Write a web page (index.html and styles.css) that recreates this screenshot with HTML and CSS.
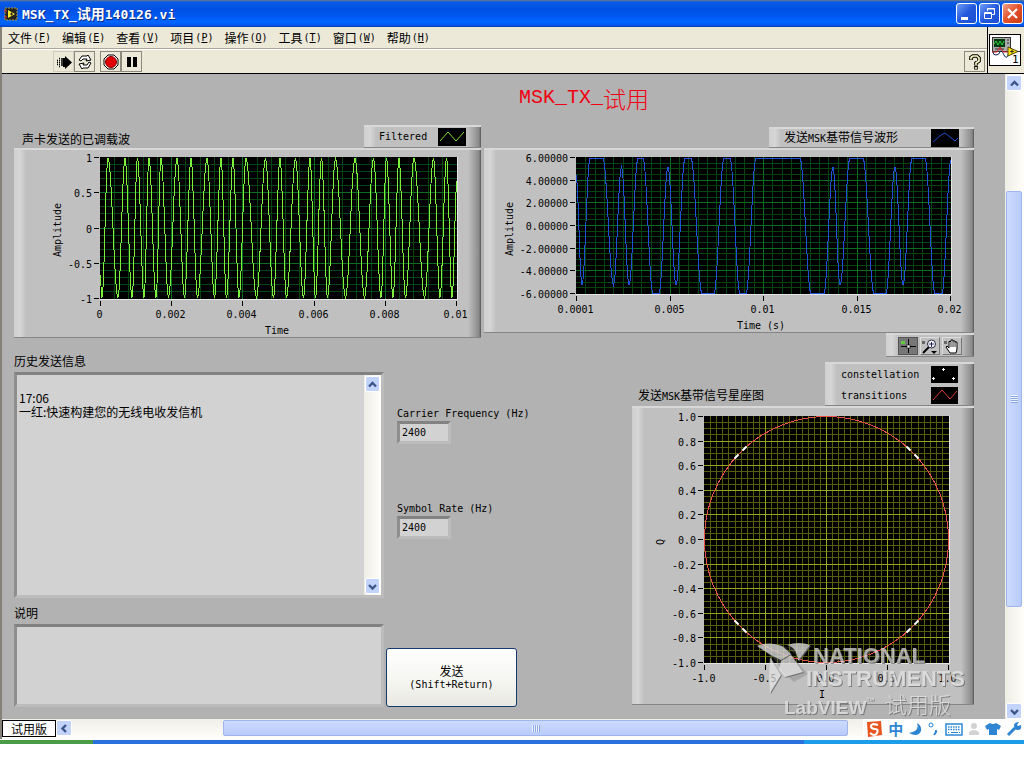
FILE: index.html
```html
<!DOCTYPE html>
<html lang="zh-CN">
<head>
<meta charset="utf-8">
<title>MSK_TX_试用140126.vi</title>
<link rel="stylesheet" href="styles.css">
</head>
<body>
<div class="window">
  <header class="titlebar">
    <svg class="app-icon" width="14" height="14" viewBox="0 0 14 14"><rect x="1" y="1" width="12" height="12" fill="#222" stroke="#b89b3a" stroke-dasharray="2 1"/><path d="M4 3v8l7-4z" fill="#ffe92e"/><path d="M6 7h3M7.500 5.500v3" stroke="#222"/><path d="M0 4h3M0 10h3" stroke="#e33"/></svg>
    <span class="window-title">MSK_TX_<span class="zh">试用</span>140126.vi</span>
    <div class="window-buttons">
      <button class="wbtn" aria-label="最小化"><svg width="19" height="19"><rect x="4" y="13" width="7" height="3" fill="#fff"/></svg></button>
      <button class="wbtn" aria-label="还原"><svg width="19" height="19" fill="none" stroke="#fff"><path d="M7.500 7V4.500h7v6H12M7 5h8M4.500 8.500h7v6h-7zM4 9.500h8" /></svg></button>
      <button class="wbtn close" aria-label="关闭"><svg width="19" height="19"><path d="M5 5l9 9M14 5l-9 9" stroke="#fff" stroke-width="2.200"/></svg></button>
    </div>
  </header>

  <div class="chrome">
    <div class="bars">
      <nav class="menubar">
        <button>文件<span class="key">(<u>F</u>)</span></button>
        <button>编辑<span class="key">(<u>E</u>)</span></button>
        <button>查看<span class="key">(<u>V</u>)</span></button>
        <button>项目<span class="key">(<u>P</u>)</span></button>
        <button>操作<span class="key">(<u>O</u>)</span></button>
        <button>工具<span class="key">(<u>T</u>)</span></button>
        <button>窗口<span class="key">(<u>W</u>)</span></button>
        <button>帮助<span class="key">(<u>H</u>)</span></button>
      </nav>
      <div class="toolbar">
        <button class="tool running" aria-label="运行"><svg width="18" height="18"><path d="M2 7.500h1M4 5.500h1M6 6h3M4 7.500h1M6 8h3M2 9.500h1M4 9.500h1M6 10h3M2 11.500h1M4 11.500h1M6 12h3M4 13.500h1" stroke="#000" stroke-width="1.500"/><path d="M8 5h2V3l7 6.500L10 16v-2H8z"/></svg></button>
        <button class="tool" aria-label="连续运行"><svg width="18" height="18" fill="#fff" stroke="#000"><path d="M3 7l3-4h5l1-1 3 5-5 1 1-2H7L5 8zM15 10l-3 5H7l-1 1-3-5 5-1-1 2h4l2-3z"/></svg></button>
        <button class="tool gap" aria-label="中止"><svg width="18" height="18"><path d="M6 2h6l4 4v6l-4 4H6l-4-4V6z" fill="#fff" stroke="#000"/><circle cx="9" cy="9" r="5.500" fill="#e00000" stroke="#800"/></svg></button>
        <button class="tool" aria-label="暂停"><svg width="18" height="18"><path d="M4 4h4v10H4zM10 4h4v10h-4z"/></svg></button>
        <button class="tool help" aria-label="帮助"><svg width="18" height="18" fill="none"><path d="M5 7V4.500L7 3h4l2 2v3l-3 2v2.500M10 13v3.500" stroke="#000" stroke-width="3.600"/><path d="M5 6.500V4.500L7 3h4l2 2v3l-3 2v2M10 14v2" stroke="#ffffc8" stroke-width="1.600"/></svg></button>
      </div>
    </div>
    <div class="connector">
      <svg width="32" height="32" viewBox="0 0 32 32"><rect x=".5" y=".5" width="31" height="31" fill="#fff" stroke="#000"/><rect x="3.500" y="3.500" width="18" height="14" fill="#aaa" stroke="#333"/><rect x="5" y="5" width="11" height="8" fill="#053b12"/><path d="M5 10l2-3 2 4 2-4 2 4 2-4" stroke="#30d040" fill="none"/><path d="M18 6h2M18 9h2M6 15h9" stroke="#333"/><path d="M3 18h5l3-5 3 5h5" stroke="#d22" fill="none"/><path d="M4 18q0 3 3 3t4-3 4 3 5-3" stroke="#125" fill="none"/><path d="M19 13v9l10-4.500z" fill="#ffe600" stroke="#554400"/><path d="M21 17.500h4M23 15.500v4M28 17.500h3" stroke="#333"/><text class="connector-num" x="23" y="29">1</text></svg>
    </div>
  </div>

  <div class="view">
    <main class="panel">
      <h1>MSK_TX_<span class="zh">试用</span></h1>

      <div class="row-waves">
        <figure class="graph">
          <div class="graph-head">
            <figcaption class="zh">声卡发送的已调载波</figcaption>
            <div class="tab tab-filtered"><span>Filtered</span><svg width="28" height="18"><rect width="28" height="18"/><path d="M2 13l8-9 8 9 8-9" fill="none" stroke="#7be03c"/></svg></div>
          </div>
          <div class="bezel"><svg id="carrier" viewBox="14 148 467 190"></svg></div>
        </figure>

        <figure class="graph">
          <div class="graph-head">
            <div class="tab tab-baseband"><span class="zh">发送<span class="latin">MSK</span>基带信号波形</span><svg width="28" height="18"><rect width="28" height="18"/><path d="M2 13l8-7 4-2 10 8 3-3" fill="none" stroke="#1c4fc8"/></svg></div>
          </div>
          <div class="bezel"><svg id="baseband" viewBox="484 148 490 185"></svg></div>
          <div class="palette">
            <button class="pal on" aria-label="光标"><svg width="20" height="16"><rect x="3" y="3" width="4" height="3" fill="#5ecb3c"/><path d="M3 8.500h15M10.500 1v14" stroke="#000"/><rect x="9" y="7" width="3" height="3" fill="#fff" stroke="#000" stroke-width=".6"/></svg></button>
            <button class="pal" aria-label="缩放"><svg width="20" height="16"><rect x="2" y="3" width="3" height="3" fill="#666"/><path d="M9 9l-6 6" stroke="#000" stroke-width="2"/><circle cx="11.500" cy="6" r="4" fill="#fff" stroke="#224"/><path d="M9 6h5M11.500 4v5" stroke="#226"/><path d="M11 13h6l-3 3z"/></svg></button>
            <button class="pal" aria-label="平移"><svg width="20" height="16"><rect x="2" y="3" width="3" height="3" fill="#666"/><path d="M8 15l-4-6 1-1 2 2V3.500h2V2h2v1h2v1h2v7l-1 4z" fill="#fff" stroke="#000"/><path d="M9 4v5M11 3v6M13 4v5" stroke="#000" stroke-width=".8"/></svg></button>
          </div>
        </figure>
      </div>

      <div class="row-controls">
        <section class="messages">
          <label class="zh" for="history">历史发送信息</label>
          <div class="sunken history">
            <textarea id="history" class="zh" readonly>

17:06
一红:快速构建您的无线电收发信机</textarea>
            <div class="vscroll slim">
              <button class="arrow" aria-label="向上"><svg width="15" height="15"><path d="M4 9.500l3.500-3.500L11 9.500" /></svg></button>
              <button class="arrow" aria-label="向下"><svg width="15" height="15"><path d="M4 6l3.500 3.500L11 6" /></svg></button>
            </div>
          </div>
          <label class="zh" for="note">说明</label>
          <div class="sunken note"><textarea id="note" class="zh"></textarea></div>
        </section>

        <section class="settings">
          <div class="field"><label for="carrier-hz">Carrier Frequency (Hz)</label><input id="carrier-hz" value="2400"></div>
          <div class="field"><label for="symbol-hz">Symbol Rate (Hz)</label><input id="symbol-hz" value="2400"></div>
          <button class="send"><span class="zh">发送</span><span>(Shift+Return)</span></button>
        </section>

        <figure class="graph constellation">
          <div class="graph-head">
            <figcaption class="zh">发送<span class="latin">MSK</span>基带信号星座图</figcaption>
            <div class="tab tab-stack">
              <div class="legend"><span>constellation</span><svg width="27" height="17"><rect width="27" height="17"/><path d="M11 3.500h3M12.500 2v3M1 12.500h3M2.500 11v3M21 12.500h3M22.500 11v3" stroke="#fff"/></svg></div>
              <div class="legend"><span>transitions</span><svg width="27" height="17"><rect width="27" height="17"/><path d="M2 13l9-10 8 9 7-8" fill="none" stroke="#d8413c"/></svg></div>
            </div>
          </div>
          <div class="bezel"><svg id="iq" viewBox="632 406 342 299"></svg></div>
        </figure>
      </div>

      <svg class="watermark" width="212" height="76" viewBox="0 0 212 76">
        <g class="wm-shade"><path d="M3 4q10-5 26 0l6 9 16 18-14 8-10-9-10-14zM30 4q12-3 23 0l-9 12z"/></g>
        <g class="wm-light">
          <path d="M0 3q13-5 25 0l9 8-10 6-10-5zM24 18l10-6 12 17-18 5-6-7zM30 2q12-4 23 0l-12 16q-1-14-11-16zM13 14l11 18-11 18-1-18z"/>
          <text x="56" y="20" class="wm-big">NATIONAL</text>
          <text x="49" y="43" class="wm-big">INSTRUMENTS</text>
          <text x="27" y="71" class="wm-mid">LabVIEW</text>
          <text x="128" y="70" class="wm-zh">试用版</text>
          <text x="109" y="60" class="wm-tm">™</text>
        </g>
      </svg>
    </main>
    <div class="vscroll">
      <button class="arrow" aria-label="向上滚动"><svg width="15" height="15"><path d="M4 9.500l3.500-3.500L11 9.500" /></svg></button>
      <div class="track"><div class="thumb"><i class="grip"></i></div></div>
      <button class="arrow" aria-label="向下滚动"><svg width="15" height="15"><path d="M4 6l3.500 3.500L11 6" /></svg></button>
    </div>
  </div>

  <div class="hbar">
    <span class="trial zh">试用版</span>
    <button class="arrow" aria-label="向左滚动"><svg width="15" height="15"><path d="M9 4L5.500 7.500 9 11" /></svg></button>
    <div class="htrack"><div class="hthumb"><i class="grip"></i></div></div>
    <div class="ime">
      <svg width="18" height="18" viewBox="0 0 18 18"><path d="M2 2l14-1 1 14-14 2z" fill="#e8531e"/><path d="M13 5q-7-2-7 1t4 3 2 4-7 0" fill="none" stroke="#fff" stroke-width="2.200"/></svg>
      <span class="ime-zh">中</span>
      <svg width="14" height="16" viewBox="0 0 14 16"><path d="M9 2q3 8-8 10 9 5 12-2 1-5-4-8z" fill="#2e86d3"/></svg>
      <svg width="12" height="16" viewBox="0 0 12 16"><circle cx="4" cy="4" r="2" fill="none" stroke="#2e86d3"/><path d="M9 9v2l-2 3" fill="none" stroke="#2e86d3" stroke-width="2"/></svg>
      <svg width="18" height="14" viewBox="0 0 18 14"><rect x="1" y="2" width="16" height="11" fill="#fff" stroke="#2e86d3" stroke-width="1.500"/><path d="M3 5h12M3 7.500h12" stroke="#2e86d3" stroke-width="1.500" stroke-dasharray="1.500 1"/><path d="M3 10.500h1M6 10.500h7M14 10.500h1" stroke="#2e86d3"/></svg>
      <svg width="12" height="16" viewBox="0 0 12 16"><circle cx="6" cy="5" r="3" fill="#d2d2d2"/><path d="M1 14V11q5-4 10 0v3z" fill="#d2d2d2"/></svg>
      <svg width="16" height="16" viewBox="0 0 16 16"><path d="M5 2q3 2 6 0l5 3-2 4-2-1v6H4V8L2 9 0 5z" fill="#2e86d3"/></svg>
      <svg width="16" height="16" viewBox="0 0 16 16"><path d="M2 14l7-7" stroke="#2e86d3" stroke-width="3"/><path d="M13 1q-5 0-5 4t4 4 3-5l-3 1-1-1z" fill="#2e86d3"/></svg>
    </div>
  </div>
  <div class="taskbar"></div>
</div>
<script src="charts.js"></script>
</body>
</html>
```
FILE: styles.css
```css
* { box-sizing: border-box; }
body { margin: 0; background: #fff; color: #000; font: 10px/14px "DejaVu Sans Mono", monospace; }
button, textarea, input { font: inherit; color: inherit; margin: 0; padding: 0; border: 0; background: none; }
svg { display: block; flex: none; }
figure, h1 { margin: 0; }
.zh { font-family: "Noto Sans CJK SC", sans-serif; font-size: 12px; line-height: 14px; }
.latin { font-family: "DejaVu Sans Mono", monospace; font-size: 10px; }
.window { display: flex; flex-direction: column; border-left: 2px solid #85827a; }

.titlebar { display: flex; align-items: center; height: 27px; margin-left: -2px; padding: 0 1px 0 4px; gap: 4px; background: linear-gradient(#6a7a86 0, #0b5ce8 2px, #0050e2 9px, #0058f0 16px, #0066ff 22px, #0058ee 25px, #003bb0 27px); color: #fff; }
.window-title { flex: 1; font-size: 13px; font-weight: bold; line-height: 20px; text-shadow: 1px 1px #0a2a80; }
.window-title .zh { font-size: 14px; line-height: 20px; }
.window-buttons { display: flex; gap: 2px; }
.wbtn { width: 21px; height: 21px; border: 1px solid #fff; border-radius: 3px; background: linear-gradient(135deg, #6f9cf4, #2459dd 50%, #1c4fd0); }
.close { background: linear-gradient(135deg, #f0a088, #e2502a 50%, #c83c14); }

.chrome { display: flex; height: 47px; background: #ece9d8; border-bottom: 1px solid #000; }
.bars { flex: 1; display: flex; flex-direction: column; }
.menubar { display: flex; gap: 11px; height: 22px; padding-left: 6px; border-bottom: 1px solid #aca899; }
.menubar button { display: flex; align-items: center; gap: 1px; height: 21px; font-family: "Noto Sans CJK SC", sans-serif; font-size: 12px; }
.key { font-family: "DejaVu Sans Mono", monospace; font-size: 10px; }
.toolbar { flex: 1; display: flex; align-items: center; padding: 0 2px 0 51px; border-top: 1px solid #fff; }
.tool { width: 21px; height: 21px; border: 1px solid; border-color: #fff #77746a #77746a #fff; outline: 1px solid #8d897c; outline-offset: -1px; padding: 1px; }
.running { border-color: #ccc; outline-color: #d0cdbf; }
.gap { margin-left: 5px; }
.help { margin-left: auto; }
.connector { width: 37px; padding: 7px 1px; border-left: 1px solid #000; }
.connector-num { font: 11px "DejaVu Sans Mono", monospace; }

.view { display: flex; }
.panel { position: relative; flex: 1; min-width: 0; padding: 12px 31px 12px 12px; background: #b2b2b2; }
h1 { display: flex; align-items: center; justify-content: center; height: 24px; margin-bottom: 15px; padding-left: 180px; color: #f00010; font: 20px/24px "Liberation Mono", monospace; }
h1 .zh { font-size: 23px; line-height: 24px; font-weight: 300; }

.row-waves { display: grid; grid-template-columns: minmax(0, 467fr) minmax(0, 490fr); gap: 3px; align-items: start; }
.row-controls { display: grid; grid-template-columns: minmax(0, 370fr) minmax(0, 248fr) minmax(0, 342fr); margin-top: -3px; }
.graph-head { display: flex; align-items: flex-end; justify-content: space-between; height: 23px; }
.graph-head figcaption { padding: 0 0 2px 8px; }
.bezel, .tab, .palette { background: linear-gradient(90deg, #cfcfcf 0, #d6d6d6 6px, #c0c0c0 12px, #c0c0c0 calc(100% - 13px), #8a8a8a calc(100% - 2px), #555 100%); border-top: 2px solid #d8d8d8; border-bottom: 1px solid #858585; }
.bezel svg { width: 100%; margin: -2px 0 -1px; }
.tab { display: flex; align-items: center; justify-content: space-between; margin-left: auto; padding: 0 15px; }
.tab-filtered { width: 117px; height: 23px; }
.tab-baseband { width: 205px; height: 21px; }
.palette { display: flex; gap: 2px; width: 88px; height: 24px; margin-left: auto; padding: 2px 12px; }
.pal { width: 20px; height: 18px; border: 1px solid; border-color: #ddd #777 #777 #ddd; }
.pal svg { margin: -1px; }
.on { background: #777; border-color: #555; }

.constellation { padding-top: 8px; }
.constellation .graph-head { height: 44px; }
.constellation figcaption { padding: 0 0 2px 6px; }
.tab-stack { display: block; width: 149px; height: 44px; padding: 0 16px; }
.legend { display: flex; align-items: center; justify-content: space-between; height: 21px; }

.messages { display: flex; flex-direction: column; }
.sunken { display: flex; border: 3px solid; border-color: #828282 #bcbcbc #bcbcbc #8e8e8e; background: #d2d2d2; }
.sunken textarea { flex: 1; min-width: 0; resize: none; padding: 2px; outline: 0; }
.history { height: 226px; margin: 4px 0 8px; }
.note { height: 83px; margin-top: 4px; }
.settings { display: flex; flex-direction: column; align-items: flex-start; padding: 53px 0 0 2px; }
.field { display: flex; flex-direction: column; height: 95px; padding-left: 11px; }
.field input { width: 54px; height: 23px; padding: 2px; border: 3px solid; border-color: #828282 #bcbcbc #bcbcbc #8e8e8e; background: #d2d2d2; }
.send { display: flex; flex-direction: column; align-items: center; justify-content: center; width: 131px; height: 59px; margin-top: auto; border: 1px solid #15396b; border-radius: 3px; background: linear-gradient(#fff, #f4f4f0 60%, #e9e8e0); }

.vscroll { display: flex; flex-direction: column; justify-content: space-between; width: 19px; padding: 1px 2px 0 1px; background: linear-gradient(90deg, #eeede5, #fffefa); }
.slim { padding: 1px 1px; width: 17px; }
.arrow { display: grid; place-items: center; width: 16px; height: 16px; border: 1px solid #fff; border-radius: 2px; background: #c2d3fc; }
.arrow svg { margin: -1px; }
.slim .arrow { width: 15px; }
.arrow path { fill: none; stroke: #3d5689; stroke-width: 2.4; }
.track { flex: 1; padding: 100px 0 96px; }
.thumb { display: grid; place-items: center; width: 16px; height: 100%; border: 1px solid #9fb5ec; border-radius: 2px; background: linear-gradient(90deg, #cbdafe, #b9cbfa); }
.thumb .grip { width: 7px; height: 8px; background: repeating-linear-gradient(#eef4fe 0 1px, #8ca6e0 1px 2px); }

.hbar { position: relative; display: flex; height: 20px; padding-top: 1px; background: linear-gradient(#f0efe8, #fffefa); }
.trial { width: 54px; height: 17px; border: 1px solid #000; background: #fff; text-align: center; line-height: 15px; }
.htrack { flex: 1; padding: 0 176px 0 151px; }
.hthumb { display: grid; place-items: center; height: 16px; border: 1px solid #9fb5ec; border-radius: 2px; background: linear-gradient(#cbdafe, #b9cbfa); }
.hthumb .grip { width: 8px; height: 7px; background: repeating-linear-gradient(90deg, #eef4fe 0 1px, #8ca6e0 1px 2px); }
.ime { position: absolute; right: 0; top: 0; display: flex; align-items: center; justify-content: space-between; width: 161px; height: 20px; padding: 0 2px; background: #fff; }
.ime-zh { color: #2e86d3; font: bold 15px/18px "Noto Sans CJK SC", sans-serif; }
.taskbar { height: 5px; margin-left: -2px; border-top: 1px solid #fff; background: linear-gradient(90deg, #4a9c48 0 93px, #2a70de 93px 804px, #1d9cea 804px); }

.watermark { position: absolute; right: 36px; bottom: 0; pointer-events: none; }
.wm-shade { fill: #777; opacity: .35; }
.wm-light { fill: #e4e4e4; opacity: .72; filter: drop-shadow(1px 1px #666); }
.wm-big { font: bold 22px "Liberation Sans", sans-serif; }
.wm-mid { font: bold 19px "Liberation Sans", sans-serif; }
.wm-zh { font: 300 22px "Noto Sans CJK SC", sans-serif; }
.wm-tm { font: 8px "Liberation Sans", sans-serif; }

.axis { font: 10px "DejaVu Sans Mono", monospace; fill: #000; }
.tick { stroke: #000; shape-rendering: crispEdges; }
.grid-line { shape-rendering: crispEdges; }
.trace { fill: none; shape-rendering: crispEdges; }
```
FILE: charts.js
```
const NS = "http://www.w3.org/2000/svg";

function add(svg, tag, attrs, text) {
  const node = document.createElementNS(NS, tag);
  for (const k in attrs) node.setAttribute(k, attrs[k]);
  if (text) node.textContent = text;
  svg.appendChild(node);
  return node;
}

/* Black plot area with minor and major grid lines, ticks and labels. */
function drawAxes(svg, o) {
  const [x0, y0, x1, y1] = o.box;
  add(svg, "rect", { x: x0, y: y0, width: x1 - x0, height: y1 - y0, fill: "#000" });
  const line = (a, b, c, d, color) =>
    add(svg, "path", { class: "grid-line", d: `M${a} ${b}L${c} ${d}`, stroke: color });
  const nx = (o.xLabels.length - 1) * o.xMinor, ny = (o.yLabels.length - 1) * o.yMinor;
  for (const major of [false, true]) {
    const color = major ? o.major : o.minor;
    for (let i = 1; i < nx; i++) if ((i % o.xMinor === 0) === major) {
      const x = Math.round(x0 + (x1 - x0 - 1) * i / nx) + 0.5;
      line(x, y0, x, y1, color);
    }
    for (let i = 1; i < ny; i++) if ((i % o.yMinor === 0) === major) {
      const y = Math.round(y0 + (y1 - y0 - 1) * i / ny) + 0.5;
      line(x0, y, x1, y, color);
    }
  }
  add(svg, "path", { d: `M${x0} ${y1 + 0.5}H${x1 + 0.5}V${y0}`, fill: "none", stroke: "#e4e4e4" });
  o.xLabels.forEach((t, i) => {
    const x = Math.round(x0 + (x1 - x0 - 1) * i / (o.xLabels.length - 1)) + 0.5;
    add(svg, "path", { class: "tick", d: `M${x} ${y1 + 2}v5` });
    add(svg, "text", { class: "axis", x: x - 1, y: y1 + 19, "text-anchor": "middle" }, t);
  });
  o.yLabels.forEach((t, i) => {
    const y = Math.round(y0 + (y1 - y0 - 1) * i / (o.yLabels.length - 1)) + 0.5;
    add(svg, "path", { class: "tick", d: `M${x0 - 6} ${y}h5` });
    add(svg, "text", { class: "axis", x: x0 - 8, y: y + 4, "text-anchor": "end" }, t);
  });
  add(svg, "text", { class: "axis", x: o.xTitle[1], y: o.xTitle[2], "text-anchor": "middle" }, o.xTitle[0]);
  const [t, tx, ty] = o.yTitle;
  add(svg, "text", { class: "axis", "text-anchor": "middle", transform: `translate(${tx} ${ty}) rotate(-90)` }, t);
}

/* Smooth half-cosine run through a list of [x, y] turning points. */
function wave(points) {
  let d = `M${points[0][0]} ${points[0][1]}`;
  for (let i = 1; i < points.length; i++) {
    const [ax, ay] = points[i - 1], [bx, by] = points[i];
    for (let k = 1; k <= 10; k++) {
      const s = k / 10;
      d += `L${(ax + (bx - ax) * s).toFixed(1)} ${(ay + (by - ay) * (1 - Math.cos(Math.PI * s)) / 2).toFixed(1)}`;
    }
  }
  return d;
}

const carrier = document.getElementById("carrier");
drawAxes(carrier, {
  box: [100, 157, 457, 299], xMinor: 5, yMinor: 5, major: "#0a6e20", minor: "#064512",
  xLabels: ["0", "0.002", "0.004", "0.006", "0.008", "0.01"],
  yLabels: ["1", "0.5", "0", "-0.5", "-1"],
  xTitle: ["Time", 277, 334], yTitle: ["Amplitude", 61, 230]
});
const turns = [102, 108, 118, 125, 132, 137.5, 144, 149, 156, 161, 168.5, 177, 184.5, 191, 197.5, 207,
  214.5, 221, 226.5, 233, 239, 246, 256.5, 265.5, 273.5, 280, 286.5, 295.5, 303.5, 310, 315.5, 321.5,
  327.5, 335.5, 345.5, 355, 364.5, 373.5, 381, 386.5, 393, 399, 405.5, 414, 424.5, 433.5, 440, 446.5, 452];
const carrierPoints = [[100, 275]].concat(turns.map((x, i) => [x, i % 2 ? 158.5 : 297.5]), [[457, 181]]);
add(carrier, "path", { class: "trace", d: wave(carrierPoints), stroke: "#7cf03a" });

const baseband = document.getElementById("baseband");
drawAxes(baseband, {
  box: [576, 157, 951, 294], xMinor: 10, yMinor: 4, major: "#0a6e20", minor: "#064512",
  xLabels: ["0.0001", "0.005", "0.01", "0.015", "0.02"],
  yLabels: ["6.00000", "4.00000", "2.00000", "0.00000", "-2.00000", "-4.00000", "-6.00000"],
  xTitle: ["Time (s)", 761, 329], yTitle: ["Amplitude", 513, 229]
});
const H = 158.5, L = 293.5, P = 167, T = 285;
add(baseband, "path", { class: "trace", stroke: "#1e50d8", d: wave([
  [576, 175], [582, T], [590, H], [603, H], [613.5, T], [621.5, P], [629, T], [638, H], [643, H],
  [653, L], [659, L], [668, P], [676, T], [685, H], [691, H], [702, L], [714, L], [724, H], [730, H],
  [740, L], [746, L], [756, H], [800, H], [811, L], [824, L], [833, P], [840, T], [850, H], [863, H],
  [874, L], [886, L], [895, P], [903, T], [912, H], [925, H], [935, L], [942, L], [951, 160]]) });

const iq = document.getElementById("iq");
drawAxes(iq, {
  box: [704, 416, 949, 663], xMinor: 10, yMinor: 4, major: "#98a41c", minor: "#565e0c",
  xLabels: ["-1.0", "-0.5", "0.0", "0.5", "1.0"],
  yLabels: ["1.0", "0.8", "0.6", "0.4", "0.2", "0.0", "-0.2", "-0.4", "-0.6", "-0.8", "-1.0"],
  xTitle: ["I", 822, 698], yTitle: ["Q", 664, 542]
});
add(iq, "ellipse", { class: "trace", cx: 826.5, cy: 539.5, rx: 122, ry: 123, stroke: "#e8504a" });
for (const sx of [-1, 1]) for (const sy of [-1, 1]) {
  const at = (x, y) => `${826.5 + sx * x} ${539.5 + sy * y}`;
  add(iq, "path", { d: `M${at(80, 93)}L${at(84, 89)}M${at(88, 85)}L${at(92, 81)}`, stroke: "#fff", "stroke-width": 2 });
}
```
